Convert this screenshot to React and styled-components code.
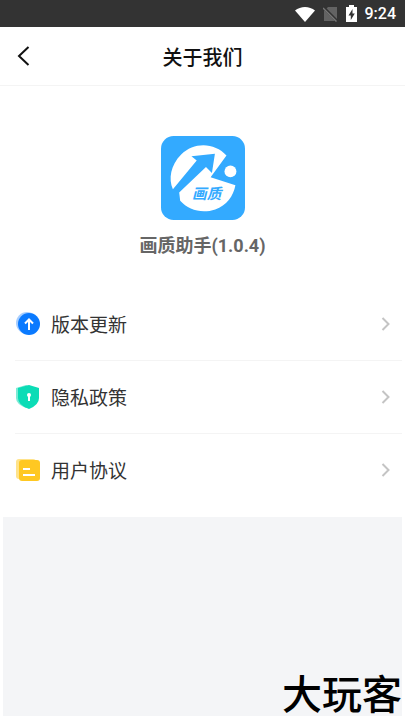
import React from 'react';
import styled, { createGlobalStyle } from 'styled-components';

const GlobalStyle = createGlobalStyle`
  * {
    box-sizing: border-box;
  }

  body {
    margin: 0;
    background: #fff;
    color: #333;
    font-family: Roboto, "Noto Sans CJK SC", sans-serif;
  }
`

const Page = styled.div`
  min-height: 100vh;
  display: flex;
  flex-direction: column;
  background: #fff;
`

const StatusBar = styled.div`
  height: 27px;
  padding: 0 9px;
  display: flex;
  align-items: center;
  justify-content: flex-end;
  background: #333;
  color: #fff;
  font-size: 16px;
  font-weight: 500;

  svg {
    margin-right: 8px;
  }
`

const Header = styled.header`
  height: 59px;
  padding: 0 16px;
  display: grid;
  grid-template-columns: 24px 1fr 24px;
  align-items: center;
  border-bottom: 1px solid #f4f4f4;
`

const BackButton = styled.button`
  height: 32px;
  padding: 0;
  display: flex;
  align-items: center;
  border: 0;
  background: none;
  color: #111;
  cursor: pointer;
`

const Title = styled.h1`
  margin: 0;
  padding-top: 4px;
  text-align: center;
  color: #111;
  font-size: 20px;
  line-height: 28px;
  font-weight: 500;
`

const AppInfo = styled.section`
  padding: 50px 0 28px;
  display: flex;
  flex-direction: column;
  align-items: center;
`

const AppName = styled.p`
  margin: 12px 0 0;
  color: #666;
  font-size: 18px;
  line-height: 28px;
  font-weight: 700;
`

const Menu = styled.nav`
  padding: 0 3px 10px 15px;
`

const MenuItem = styled.a`
  height: 73px;
  padding-right: 12px;
  display: flex;
  align-items: center;
  border-bottom: 1px solid ${props => props.$last ? 'transparent' : '#f4f4f4'};
  color: #333;
  text-decoration: none;
`

const MenuLabel = styled.span`
  flex: 1;
  margin-left: 10px;
  padding-top: 4px;
  font-size: 19px;
  line-height: 28px;
`

const Footer = styled.footer`
  flex: 1;
  margin: 0 3px 4px;
  display: flex;
  align-items: flex-end;
  justify-content: flex-end;
  background: #f4f5f7;
`

const Watermark = styled.span`
  color: #000;
  font-size: 40px;
  line-height: 40px;
  font-weight: 500;
`

const LogoText = styled.text`
  fill: #33aaff;
  font-family: "Noto Sans CJK SC", sans-serif;
  font-size: 44px;
  font-weight: 700;
  font-style: italic;
`

const StatusIcons = () => (
  <>
    <svg width="20" height="16" viewBox="0 0 20 16" aria-hidden="true">
      <path d="M0 4.500C5.500-.2 14.500-.2 20 4.500L10 16z" fill="#fff"/>
    </svg>
    <svg width="15" height="16" viewBox="0 0 15 16" aria-hidden="true">
      <path d="M5 1h9v14H1V5z" fill="#636363"/>
      <path d="M0 1l14 14" stroke="#333" strokeWidth="3"/>
      <path d="M0 2l13.500 13.500" stroke="#777" strokeWidth="1.500"/>
    </svg>
    <svg width="11" height="18" viewBox="0 0 11 18" aria-hidden="true">
      <path d="M3 0h5v2h3v15H0V2h3z" fill="#fff"/>
      <path d="M6.500 4L2.500 10.500h2.300V15l4-6.500H6.500z" fill="#333"/>
    </svg>
  </>
)

const AppLogo = () => (
  <svg width="84" height="84" viewBox="30 30 254 254" role="img" aria-label="画质助手">
    <rect x="30" y="30" width="254" height="254" rx="38" fill="#33aaff"/>
    <path
      d="M228 89C193 50 131 46 91 86C59 118 52 160 66 191L138 104L122 91L193 84L184 142L166 124L85 201L88 226C113 254 154 266 194 252C228 240 249 212 255 179L180 155L228 89Z"
      fill="#fff"
    />
    <circle cx="240" cy="137" r="18" fill="#fff"/>
    <LogoText x="124" y="221">画质</LogoText>
  </svg>
)

const UpdateIcon = () => (
  <svg width="26" height="24" viewBox="0 0 26 24" aria-hidden="true">
    <circle cx="12" cy="11" r="11" fill="#a7ceff"/>
    <circle cx="14" cy="12" r="11" fill="#0a7aff"/>
    <path d="M14 18V8M10 11.500L14 7.500l4 4" fill="none" stroke="#fff" strokeWidth="2"/>
  </svg>
)

const PrivacyIcon = () => (
  <svg width="26" height="24" viewBox="0 0 26 24" aria-hidden="true">
    <path d="M11 0l10 3v10q0 6-10 10Q1 19 1 13V3z" fill="#7cebd5"/>
    <path d="M14 0l10 3v10q0 7-10 11Q3 20 3 13V3z" fill="#0bdcb6"/>
    <circle cx="14" cy="10" r="2" fill="#fff"/>
    <path d="M14 10v6" stroke="#fff" strokeWidth="2"/>
  </svg>
)

const AgreementIcon = () => (
  <svg width="26" height="24" viewBox="0 0 26 24" aria-hidden="true">
    <rect x="1" y="1" width="20" height="20" rx="3" fill="#ffe38a"/>
    <rect x="4" y="2" width="21" height="21" rx="3" fill="#ffc822"/>
    <path d="M8 11h7M8 17h12" stroke="#fff" strokeWidth="2"/>
  </svg>
)

const Chevron = () => (
  <svg width="9" height="14" viewBox="0 0 9 14" aria-hidden="true">
    <path d="M1.500 1l6 6-6 6" fill="none" stroke="#c4c4c4" strokeWidth="2"/>
  </svg>
)

const items = [
  { id: 'update', label: '版本更新', icon: <UpdateIcon/> },
  { id: 'privacy', label: '隐私政策', icon: <PrivacyIcon/> },
  { id: 'agreement', label: '用户协议', icon: <AgreementIcon/> },
]

const App = () => {
  return (
    <Page>
      <GlobalStyle/>
      <StatusBar>
        <StatusIcons/>
        <span>9:24</span>
      </StatusBar>
      <Header>
        <BackButton type="button" aria-label="返回">
          <svg width="15" height="20" viewBox="0 0 15 20" aria-hidden="true">
            <path d="M12.500 1L3 10l9.500 9" fill="none" stroke="currentColor" strokeWidth="2"/>
          </svg>
        </BackButton>
        <Title>关于我们</Title>
      </Header>
      <AppInfo>
        <AppLogo/>
        <AppName>画质助手(1.0.4)</AppName>
      </AppInfo>
      <Menu>
        {items.map((item, index) => (
          <MenuItem key={item.id} href={`#${item.id}`} $last={index === items.length - 1}>
            {item.icon}
            <MenuLabel>{item.label}</MenuLabel>
            <Chevron/>
          </MenuItem>
        ))}
      </Menu>
      <Footer>
        <Watermark>大玩客</Watermark>
      </Footer>
    </Page>
  );
};

export default App;
